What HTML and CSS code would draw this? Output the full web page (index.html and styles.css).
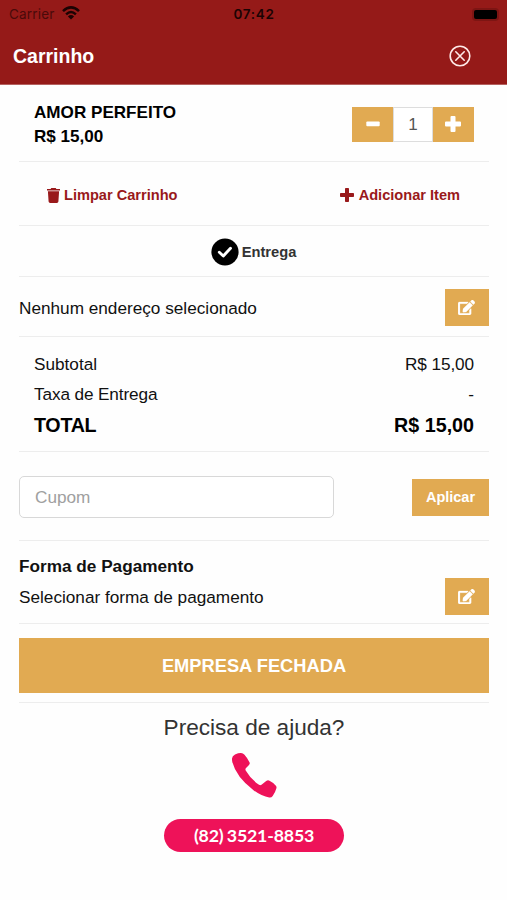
FILE: index.html
```html
<!DOCTYPE html>
<html lang="pt-BR">
<head>
<meta charset="utf-8">
<title>Carrinho</title>
<link rel="stylesheet" href="styles.css">
</head>
<body>
<header class="header">
  <div class="status">
    <div class="carrier"><span>Carrier</span>
      <svg width="18" height="14" viewBox="0 0 18 14" fill="none" stroke="#1b0303" stroke-width="2.5"><path d="M1 5.2Q9-2.4 17 5.2M4.1 8.3Q9 3.8 13.9 8.3"/><path d="M9 13.5L5.9 10.4Q9 7.7 12.1 10.4Z" fill="#1b0303" stroke="none"/></svg>
    </div>
    <div class="clock">07:42</div>
    <div class="battery"><i class="battery-level"></i></div>
  </div>
  <div class="titlebar">
    <h1>Carrinho</h1>
    <svg class="close" width="22" height="22" viewBox="0 0 22 22" fill="none" stroke="#ffeae8" stroke-width="1.6" stroke-linecap="round"><circle cx="11" cy="11" r="9.8"/><path d="M6.800 6.800l8.400 8.400M15.200 6.800l-8.400 8.400"/></svg>
  </div>
</header>
<main class="cart">
  <section class="item">
    <div class="item-info"><div>AMOR PERFEITO</div><div>R$ 15,00</div></div>
    <div class="stepper">
      <button class="step"><svg width="16" height="16" viewBox="0 0 16 16" fill="#fff"><rect x="1.300" y="5.500" width="13.400" height="4.800" rx="1"/></svg></button>
      <span class="quantity">1</span>
      <button class="step step-add"><svg width="16" height="16" viewBox="0 0 16 16" fill="#fff"><path d="M6.500 0h3q1 0 1 1v4.500H15q1 0 1 1v3q0 1-1 1h-4.500V15q0 1-1 1h-3q-1 0-1-1v-4.500H1q-1 0-1-1v-3q0-1 1-1h4.500V1q0-1 1-1z"/></svg></button>
    </div>
  </section>
  <section class="actions">
    <a class="action"><svg width="13" height="15" viewBox="0 0 13 15" fill="#99191b"><path d="M4.300 0h4.400l.7 1H13v1.500H0V1h3.600zM.9 3.300h11.200l-.7 10.300q-.1 1.400-1.500 1.400H3.100q-1.400 0-1.500-1.400z"/></svg>Limpar Carrinho</a>
    <a class="action action-add"><svg width="14" height="14" viewBox="0 0 14 14" fill="#99191b"><path d="M5.800 0h2.400q.8 0 .8.800V5h4.200q.8 0 .8.800v2.400q0 .8-.8.800H9v4.200q0 .8-.8.800H5.800q-.8 0-.8-.8V9H.8Q0 9 0 8.200V5.800Q0 5 .8 5H5V.8q0-.8.8-.8z"/></svg>Adicionar Item</a>
  </section>
  <section class="delivery">
    <svg width="28" height="28" viewBox="0 0 28 28"><circle cx="14" cy="14" r="13.600"/><path d="M8.300 14.300l4 3.700 7.200-7.700" fill="none" stroke="#fff" stroke-width="2.900" stroke-linecap="round" stroke-linejoin="round"/></svg>Entrega
  </section>
  <section class="address">
    <span>Nenhum endereço selecionado</span>
    <button class="edit"><svg width="17" height="15" viewBox="0 0 576 512" fill="#fff" stroke="#fff" stroke-width="8"><path d="M402.600 83.200l90.200 90.200c3.800 3.800 3.800 10 0 13.800L274.400 405.600l-92.800 10.300c-12.400 1.400-22.900-9.100-21.500-21.500l10.300-92.800L388.800 83.200c3.800-3.800 10-3.800 13.800 0zm162-22.900l-48.800-48.800c-15.200-15.200-39.900-15.200-55.200 0l-35.400 35.400c-3.800 3.800-3.800 10 0 13.800l90.200 90.200c3.800 3.800 10 3.800 13.800 0l35.400-35.400c15.200-15.300 15.200-40 0-55.200zM384 346.200V448H64V128h229.800c3.200 0 6.200-1.300 8.500-3.500l40-40c7.600-7.600 2.200-20.500-8.500-20.500H48C21.500 64 0 85.500 0 112v352c0 26.500 21.500 48 48 48h352c26.500 0 48-21.500 48-48V306.200c0-10.700-12.900-16-20.500-8.500l-40 40c-2.200 2.300-3.500 5.300-3.500 8.500z"/></svg></button>
  </section>
  <section class="totals">
    <div class="line"><span>Subtotal</span><span class="amount">R$ 15,00</span></div>
    <div class="line"><span class="fee">Taxa de Entrega</span><span>-</span></div>
    <div class="line line-total"><span class="total-label">TOTAL</span><span>R$ 15,00</span></div>
  </section>
  <section class="coupon">
    <input class="coupon-input" placeholder="Cupom">
    <button class="apply">Aplicar</button>
  </section>
  <section class="payment">
    <div class="payment-info"><strong>Forma de Pagamento</strong><span>Selecionar forma de pagamento</span></div>
    <button class="edit"><svg width="17" height="15" viewBox="0 0 576 512" fill="#fff" stroke="#fff" stroke-width="8"><path d="M402.600 83.200l90.200 90.200c3.800 3.800 3.800 10 0 13.800L274.400 405.600l-92.800 10.300c-12.400 1.400-22.900-9.100-21.500-21.500l10.300-92.800L388.800 83.200c3.800-3.800 10-3.800 13.800 0zm162-22.900l-48.800-48.800c-15.200-15.200-39.900-15.200-55.200 0l-35.400 35.400c-3.800 3.800-3.800 10 0 13.800l90.200 90.200c3.800 3.800 10 3.800 13.800 0l35.400-35.400c15.200-15.300 15.200-40 0-55.200zM384 346.200V448H64V128h229.800c3.200 0 6.200-1.300 8.500-3.500l40-40c7.600-7.600 2.200-20.500-8.500-20.500H48C21.500 64 0 85.500 0 112v352c0 26.500 21.500 48 48 48h352c26.500 0 48-21.500 48-48V306.200c0-10.700-12.900-16-20.500-8.500l-40 40c-2.200 2.300-3.500 5.300-3.500 8.500z"/></svg></button>
  </section>
  <section class="submit"><button class="closed">EMPRESA FECHADA</button></section>
  <section class="help">
    <h2>Precisa de ajuda?</h2>
    <svg class="phone" width="46" height="46" viewBox="0 0 46 46" fill="#ee1259"><path d="M0 5.500Q.2 3 3 1.500 6.500 0 9 .1q2 0 3.500 1.600Q15.500 5 17.600 9.500q.6 1.300-.6 2.600l-3 3q-1 1.200-.3 2.500Q18.500 26 27 31.800q1.300.8 2.500-.1l4.700-3.700q1.600-1.100 3.300-.3 3.800 1.800 6.400 5 .9 1.200.5 2.600-1 4-3.700 7.600-1.300 1.800-3.500 1.500-7.500-1-15.700-7.200Q4.200 24 .3 9-.1 7 0 5.500z"/></svg>
    <a class="phone-number">(82) 3521-8853</a>
  </section>
</main>
</body>
</html>
```

FILE: styles.css
```css
* { box-sizing: border-box; }
body { margin: 0; height: 900px; background: #fefefe; color: #111; font: 17.2px/24px "Liberation Sans", Arial, sans-serif; overflow: hidden; }
button { border: 0; padding: 0; background: #e1aa52; color: #fff; font-family: inherit; display: flex; align-items: center; justify-content: center; }
h1, h2 { margin: 0; }
.header { height: 85px; background: #951a18; border-bottom: 1px solid #b5615f; }
.status { height: 28px; padding: 0 8px 0 9px; display: grid; grid-template-columns: 1fr auto 1fr; align-items: center; color: #1b0303; font: 13.500px/28px Inter, sans-serif; }
.carrier { display: flex; align-items: center; gap: 7px; color: #4a0a0a; letter-spacing: .2px; }
.carrier svg { margin-top: -2px; }
.clock { font-weight: 600; letter-spacing: .7px; }
.battery { justify-self: end; width: 27px; height: 13px; padding: 2px; border-radius: 4px; background: #7d1513; }
.battery-level { display: block; width: 23px; height: 9px; border-radius: 2px; background: #000; }
.titlebar { height: 56px; padding: 0 36px 0 13px; display: flex; align-items: center; justify-content: space-between; color: #fff; }
.titlebar h1 { font-size: 19.500px; }
.cart { padding: 0 18px 0 19px; }
.cart > section { border-bottom: 1px solid #ededed; display: flex; align-items: center; justify-content: space-between; }
.cart > .item { height: 77px; padding: 0 15px; }
.item-info { padding-top: 4px; font-weight: 700; color: #000; font-size: 17.100px; }
.stepper { display: flex; height: 35px; margin-top: 2px; }
.step { width: 41px; }
.step-add { padding-right: 2px; }
.quantity { width: 40px; border: 1px solid #ddd; background: #fff; color: #555; text-align: center; line-height: 34px; font-size: 17px; }
.cart > .actions { height: 64px; padding: 3px 29px 0 28px; }
.action { display: flex; align-items: center; gap: 4px; color: #99191b; font-size: 14.600px; font-weight: 700; }
.action-add { gap: 5px; }
.cart > .delivery { height: 51px; padding: 2px 1px 0 0; justify-content: center; gap: 3px; font-size: 14.700px; font-weight: 700; color: #333; }
.cart > .address { height: 60px; padding-top: 2px; }
.address span { padding-top: 1px; }
.edit { width: 44px; height: 37px; padding-right: 2px; }
.cart > .totals { height: 115px; padding: 0 15px; display: block; }
.line { display: flex; justify-content: space-between; line-height: 30px; }
.line:first-child { padding-top: 12px; }
.amount { letter-spacing: -.1px; }
.fee { letter-spacing: -.12px; }
.line-total { font-size: 19.700px; font-weight: 700; color: #000; line-height: 33px; }
.total-label { letter-spacing: -.3px; }
.cart > .coupon { height: 89px; padding-top: 2px; }
.coupon-input { width: 315px; height: 42px; border: 1.500px solid #d8d8d8; border-radius: 5px; padding: 0 15px; background: #fff; font: inherit; }
.coupon-input::placeholder { color: #a0a0a0; opacity: 1; }
.apply { width: 77px; height: 37px; font-size: 14.500px; font-weight: 700; }
.cart > .payment { height: 83px; }
.payment-info { display: flex; flex-direction: column; line-height: 31px; }
.payment .edit { margin-top: 28px; }
.cart > .submit { height: 79px; padding-top: 5px; }
.closed { width: 100%; height: 55px; font-size: 18.300px; font-weight: 700; }
.cart > .help { border: 0; flex-direction: column; justify-content: flex-start; }
.help h2 { margin-top: 10px; font-size: 22.600px; font-weight: 400; line-height: 30px; color: #333; }
.phone { margin: 10px 0 0 2px; }
.phone-number { width: 180px; height: 33px; margin-top: 20px; border-radius: 17px; background: #ee1259; color: #fff; text-align: center; font: 700 17.800px/33px Lato, sans-serif; letter-spacing: -.2px; word-spacing: -.8px; }
```
